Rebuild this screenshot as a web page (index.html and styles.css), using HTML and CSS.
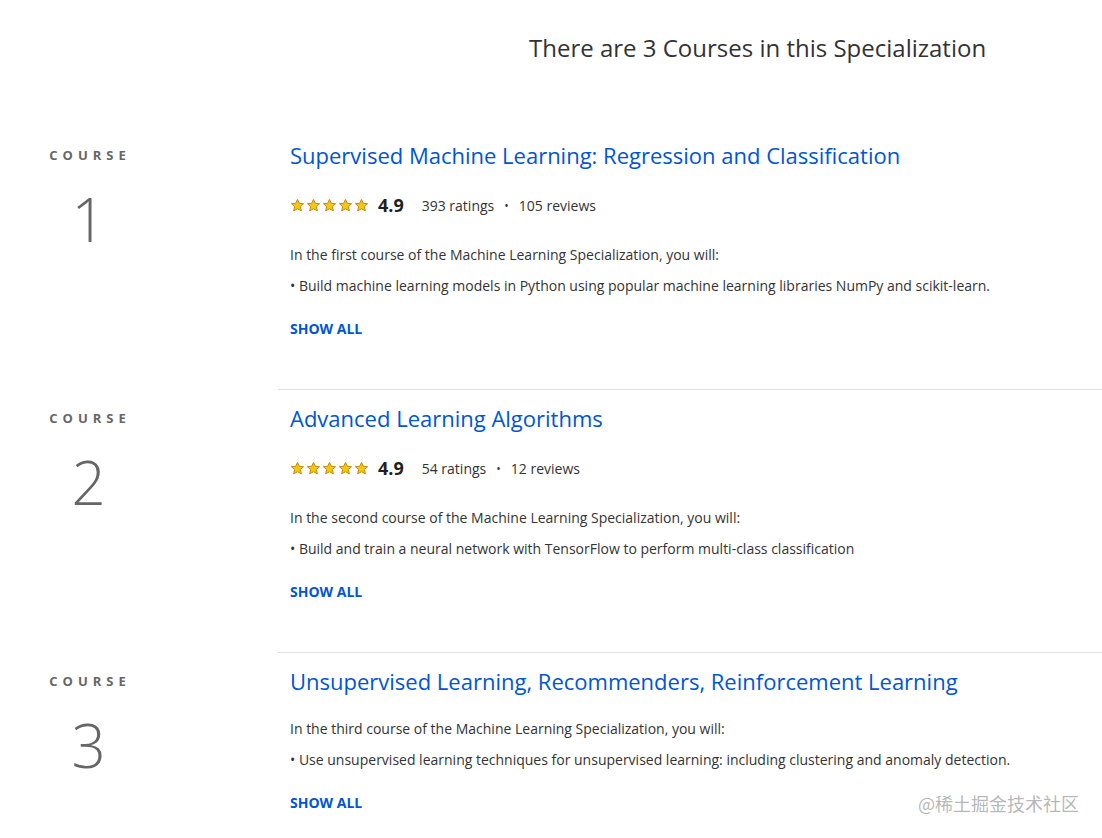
FILE: index.html
```html
<!DOCTYPE html>
<html lang="en">
<head>
    <meta charset="UTF-8">
    <title>Machine Learning Specialization</title>
    <link rel="stylesheet" href="styles.css">
</head>
<body>

<div class="page">
    <h2 class="heading">There are 3 Courses in this Specialization</h2>

    <!-- Course 1 -->
    <div class="course">
        <div class="course-num">
            <div class="label">COURSE</div>
            <div class="number">1</div>
        </div>
        <div class="course-body">
            <a class="title" href="#">Supervised Machine Learning: Regression and Classification</a>
            <div class="rating">
                <span class="stars">
                    <svg viewBox="0 0 24 24"><path d="M12 2.2l2.9 6.3 6.8.7-5.1 4.6 1.5 6.8L12 17.1l-6.1 3.5 1.5-6.8-5.1-4.6 6.8-.7z"/></svg>
                    <svg viewBox="0 0 24 24"><path d="M12 2.2l2.9 6.3 6.8.7-5.1 4.6 1.5 6.8L12 17.1l-6.1 3.5 1.5-6.8-5.1-4.6 6.8-.7z"/></svg>
                    <svg viewBox="0 0 24 24"><path d="M12 2.2l2.9 6.3 6.8.7-5.1 4.6 1.5 6.8L12 17.1l-6.1 3.5 1.5-6.8-5.1-4.6 6.8-.7z"/></svg>
                    <svg viewBox="0 0 24 24"><path d="M12 2.2l2.9 6.3 6.8.7-5.1 4.6 1.5 6.8L12 17.1l-6.1 3.5 1.5-6.8-5.1-4.6 6.8-.7z"/></svg>
                    <svg viewBox="0 0 24 24"><path d="M12 2.2l2.9 6.3 6.8.7-5.1 4.6 1.5 6.8L12 17.1l-6.1 3.5 1.5-6.8-5.1-4.6 6.8-.7z"/></svg>
                </span>
                <span class="score">4.9</span>
                <span class="count">393 ratings</span>
                <span class="dot">•</span>
                <span class="count">105 reviews</span>
            </div>
            <p class="desc">In the first course of the Machine Learning Specialization, you will:</p>
            <p class="desc">• Build machine learning models in Python using popular machine learning libraries NumPy and scikit-learn.</p>
            <a class="show-all" href="#">SHOW ALL</a>
        </div>
    </div>

    <!-- Course 2 -->
    <div class="course">
        <div class="course-num">
            <div class="label">COURSE</div>
            <div class="number">2</div>
        </div>
        <div class="course-body divided">
            <a class="title" href="#">Advanced Learning Algorithms</a>
            <div class="rating">
                <span class="stars">
                    <svg viewBox="0 0 24 24"><path d="M12 2.2l2.9 6.3 6.8.7-5.1 4.6 1.5 6.8L12 17.1l-6.1 3.5 1.5-6.8-5.1-4.6 6.8-.7z"/></svg>
                    <svg viewBox="0 0 24 24"><path d="M12 2.2l2.9 6.3 6.8.7-5.1 4.6 1.5 6.8L12 17.1l-6.1 3.5 1.5-6.8-5.1-4.6 6.8-.7z"/></svg>
                    <svg viewBox="0 0 24 24"><path d="M12 2.2l2.9 6.3 6.8.7-5.1 4.6 1.5 6.8L12 17.1l-6.1 3.5 1.5-6.8-5.1-4.6 6.8-.7z"/></svg>
                    <svg viewBox="0 0 24 24"><path d="M12 2.2l2.9 6.3 6.8.7-5.1 4.6 1.5 6.8L12 17.1l-6.1 3.5 1.5-6.8-5.1-4.6 6.8-.7z"/></svg>
                    <svg viewBox="0 0 24 24"><path d="M12 2.2l2.9 6.3 6.8.7-5.1 4.6 1.5 6.8L12 17.1l-6.1 3.5 1.5-6.8-5.1-4.6 6.8-.7z"/></svg>
                </span>
                <span class="score">4.9</span>
                <span class="count">54 ratings</span>
                <span class="dot">•</span>
                <span class="count">12 reviews</span>
            </div>
            <p class="desc">In the second course of the Machine Learning Specialization, you will:</p>
            <p class="desc">• Build and train a neural network with TensorFlow to perform multi-class classification</p>
            <a class="show-all" href="#">SHOW ALL</a>
        </div>
    </div>

    <!-- Course 3 -->
    <div class="course">
        <div class="course-num">
            <div class="label">COURSE</div>
            <div class="number">3</div>
        </div>
        <div class="course-body divided">
            <a class="title" href="#">Unsupervised Learning, Recommenders, Reinforcement Learning</a>
            <p class="desc">In the third course of the Machine Learning Specialization, you will:</p>
            <p class="desc">• Use unsupervised learning techniques for unsupervised learning: including clustering and anomaly detection.</p>
            <a class="show-all" href="#">SHOW ALL</a>
        </div>
    </div>
</div>

<div class="watermark">@稀土掘金技术社区</div>

</body>
</html>
```

FILE: styles.css
```css
body {
    font-family: "Open Sans", "Noto Sans CJK SC", sans-serif;
    margin: 0;
    background: white;
    color: #1f1f1f;
}
.page {
    width: 1102px;
}
.heading {
    margin: 32px 0 62px 529px;
    font-size: 24px;
    line-height: 32px;
    font-weight: 400;
    color: #333;
}
.course {
    display: flex;
}
.course-num {
    width: 177px;
    flex: none;
    margin-right: 101px;
    text-align: center;
    color: #666;
}
.label {
    padding-top: 19px;
    padding-left: 3px;
    font-size: 13px;
    line-height: 20px;
    font-weight: 700;
    letter-spacing: 5px;
}
.number {
    margin-top: 18px;
    font-size: 60px;
    line-height: 72px;
    font-weight: 300;
}
.course-body {
    flex: 1;
    padding: 15px 0 50px 12px;
}
.divided {
    border-top: 1px solid #e1e1e1;
    padding-top: 14px;
}
.title {
    display: block;
    font-size: 22px;
    line-height: 28px;
    color: #0056d2;
    text-decoration: none;
}
.rating {
    display: flex;
    align-items: center;
    margin-top: 24px;
    height: 24px;
    color: #333;
    font-size: 14px;
}
.stars {
    display: flex;
    gap: 1px;
    margin-right: 9px;
}
.stars svg {
    width: 15px;
    height: 15px;
    fill: #f5c518;
    stroke: #c28a0e;
    stroke-width: 1.6;
    stroke-linejoin: round;
}
.score {
    font-size: 18px;
    font-weight: 700;
    color: #1f1f1f;
    margin-right: 18px;
}
.dot {
    margin: 0 10px;
    font-size: 12px;
}
.desc {
    margin: 10px 0 0;
    font-size: 14px;
    line-height: 21px;
    color: #333;
}
.title + .desc {
    margin-top: 23px;
}
.rating + .desc {
    margin-top: 27px;
}
.show-all {
    display: inline-block;
    margin-top: 23px;
    font-size: 14px;
    line-height: 20px;
    font-weight: 700;
    color: #0056d2;
    text-decoration: none;
}
.watermark {
    position: absolute;
    left: 918px;
    top: 791px;
    font-size: 18px;
    line-height: 24px;
    color: rgba(120, 120, 120, 0.55);
    font-family: "Noto Sans CJK SC", sans-serif;
}
```
